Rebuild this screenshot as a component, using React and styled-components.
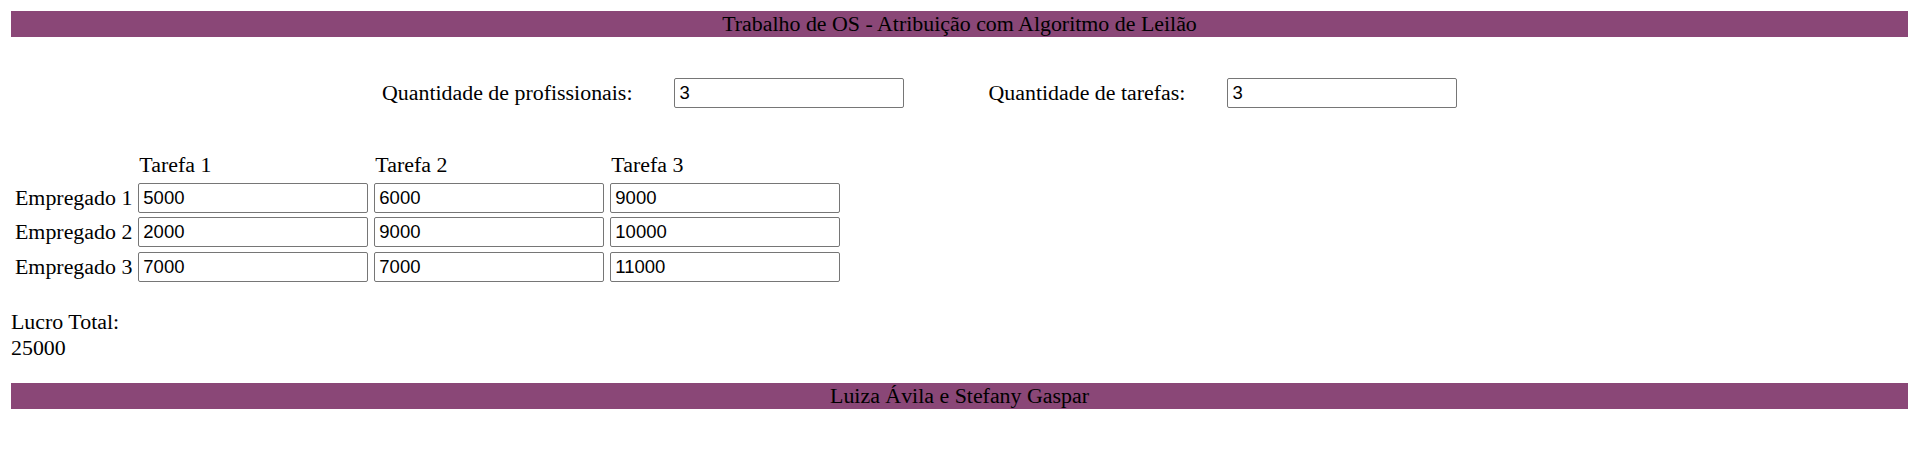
import React, { useState } from "react";
import styled, { createGlobalStyle } from "styled-components";

const GlobalStyle = createGlobalStyle`
  body {
    margin: 11px 4px 11px 11px;
    font-family: "Liberation Serif", "Times New Roman", serif;
    font-size: 21.9px;
    color: #000;
    background: #fff;
  }
`;

const Banner = styled.div`
  height: 26px;
  line-height: 26px;
  text-align: center;
  background: #8a4777;
  color: #000;
`;

const Controls = styled.div`
  display: flex;
  align-items: center;
  gap: 84px;
  height: 30px;
  margin-top: 41px;
  padding-left: 371px;
`;

const Field = styled.label`
  display: flex;
  align-items: center;
  gap: 42px;
  line-height: 26px;
`;

const NumberInput = styled.input`
  box-sizing: border-box;
  width: 230px;
  height: 30px;
  margin: 0;
  padding: 0 4px;
  border: 1px solid #767676;
  border-radius: 2px;
  background: #fff;
  color: #000;
  font-family: "Liberation Sans", Arial, sans-serif;
  font-size: 18.5px;
  outline: none;
`;

const Grid = styled.div`
  display: grid;
  grid-template-columns: auto repeat(${({ $cols }) => $cols}, 230px);
  column-gap: 6px;
  row-gap: 4.5px;
  align-items: center;
  justify-content: start;
  margin-top: 44px;
  padding-left: 4px;
  line-height: 26px;
`;

const ColHead = styled.div`
  padding-left: 1px;
`;

const RowHead = styled.div`
  white-space: nowrap;
`;

const Result = styled.div`
  margin-top: 27.5px;
  line-height: 26px;
`;

const Footer = styled(Banner)`
  margin-top: 22px;
`;

const initial = [
  [5000, 6000, 9000],
  [2000, 9000, 10000],
  [7000, 7000, 11000],
];

const resize = (matrix, rows, cols) =>
  Array.from({ length: rows }, (_, i) =>
    Array.from({ length: cols }, (_, j) => (matrix[i] && matrix[i][j]) ?? 0)
  );

// melhor atribuicao (forca bruta, tabelas pequenas)
const bestProfit = (matrix) => {
  const rows = matrix.length;
  const cols = rows ? matrix[0].length : 0;
  let best = 0;
  const used = new Array(cols).fill(false);
  const walk = (i, sum) => {
    if (i === rows) {
      best = Math.max(best, sum);
      return;
    }
    let placed = false;
    for (let j = 0; j < cols; j++) {
      if (used[j]) continue;
      placed = true;
      used[j] = true;
      walk(i + 1, sum + Number(matrix[i][j] || 0));
      used[j] = false;
    }
    if (!placed) walk(i + 1, sum);
  };
  walk(0, 0);
  return best;
};

const App = () => {
  const [workers, setWorkers] = useState("3");
  const [tasks, setTasks] = useState("3");
  const [values, setValues] = useState(initial);

  const rows = Math.max(0, Math.min(8, parseInt(workers, 10) || 0));
  const cols = Math.max(0, Math.min(8, parseInt(tasks, 10) || 0));
  const matrix = resize(values, rows, cols);

  const update = (i, j, v) => {
    const next = matrix.map((r) => r.slice());
    next[i][j] = v;
    setValues(next);
  };

  return (
    <>
      <GlobalStyle />
      <Banner>Trabalho de OS - Atribuição com Algoritmo de Leilão</Banner>
      <Controls>
        <Field>
          Quantidade de profissionais:
          <NumberInput value={workers} onChange={(e) => setWorkers(e.target.value)} />
        </Field>
        <Field>
          Quantidade de tarefas:
          <NumberInput value={tasks} onChange={(e) => setTasks(e.target.value)} />
        </Field>
      </Controls>
      <Grid $cols={cols}>
        <div />
        {matrix[0] &&
          matrix[0].map((_, j) => <ColHead key={`h${j}`}>Tarefa {j + 1}</ColHead>)}
        {matrix.map((row, i) => (
          <React.Fragment key={`r${i}`}>
            <RowHead>Empregado {i + 1}</RowHead>
            {row.map((v, j) => (
              <NumberInput
                key={`c${i}-${j}`}
                value={v}
                onChange={(e) => update(i, j, e.target.value)}
              />
            ))}
          </React.Fragment>
        ))}
      </Grid>
      <Result>
        Lucro Total:
        <br />
        {bestProfit(matrix)}
      </Result>
      <Footer>Luiza Ávila e Stefany Gaspar</Footer>
    </>
  );
};

export default App;
